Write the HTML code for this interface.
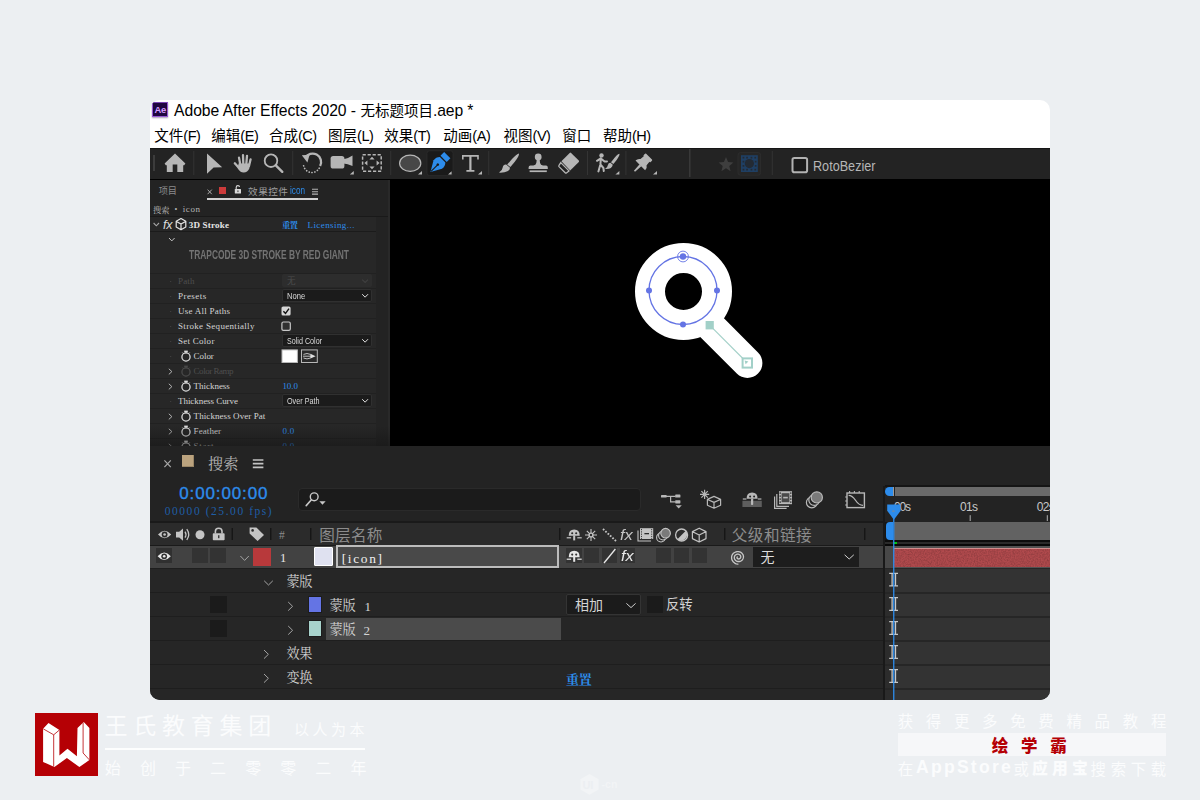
<!DOCTYPE html>
<html lang="zh-CN">
<head>
<meta charset="utf-8">
<title>Adobe After Effects 2020 - 无标题项目.aep *</title>
<style>
*{box-sizing:border-box;margin:0;padding:0}
html,body{width:1200px;height:800px;overflow:hidden;background:#eceff2}
body{position:relative;font-family:"Liberation Sans","Noto Sans CJK SC",sans-serif;}
#win{position:absolute;left:150px;top:100px;width:900px;height:600px;border-radius:10px;overflow:hidden}
#win>div,#win>svg,#o>div,#o>svg,.wm>div,.wm>svg{position:absolute}
#o{left:-150px;top:-100px;width:1200px;height:800px}
.wm{position:absolute;left:0;top:0;width:1200px;height:800px}
.t{white-space:nowrap;line-height:1}
.ui{font-family:"Liberation Sans","Noto Sans CJK SC",sans-serif}
.sim{font-family:"Liberation Mono","Noto Serif CJK SC",monospace}
.ser{font-family:"Liberation Serif","Noto Serif CJK SC",serif}
svg{overflow:visible}
.mn{top:28.5px;font-size:14.5px;color:#000;margin-left:-.7px}.lp{letter-spacing:-.45px}
</style>
</head>
<body>
<div id="win">
<!-- TITLE -->
<div style="left:0;top:0;width:900px;height:49px;background:#fff"></div>
<div style="left:2.4px;top:2.2px;width:15.8px;height:14.8px;background:#1f0640;border:1px solid #9658d4;border-top-color:#7a45b4;box-shadow:0 1px 1.5px rgba(60,40,90,.45)"></div>
<div class="t ui" id="aeL" style="left:4.5px;top:4.8px;font-size:9.4px;font-weight:bold;color:#d59dff;letter-spacing:-0.35px">Ae</div>
<div class="t ui" id="ttl" style="left:24px;top:2.6px;font-size:15.7px;color:#000"><span style="letter-spacing:-.03px">Adobe After Effects 2020 - </span><span style="font-size:14.5px">无标题项目</span><span style="letter-spacing:-.1px">.aep *</span></div>

<!-- MENU -->
<div class="t ui mn" style="left:5px">文件<span class="lp">(F)</span></div>
<div class="t ui mn" style="left:62px">编辑<span class="lp">(E)</span></div>
<div class="t ui mn" style="left:119.6px">合成<span class="lp">(C)</span></div>
<div class="t ui mn" style="left:178.8px">图层<span class="lp">(L)</span></div>
<div class="t ui mn" style="left:235px">效果<span class="lp">(T)</span></div>
<div class="t ui mn" style="left:294px">动画<span class="lp">(A)</span></div>
<div class="t ui mn" style="left:354.2px">视图<span class="lp">(V)</span></div>
<div class="t ui mn" style="left:413px">窗口</div>
<div class="t ui mn" style="left:453.6px">帮助<span class="lp">(H)</span></div>

<!-- TOOLBAR -->
<div style="left:0;top:48px;width:900px;height:1px;background:#161616"></div>
<div style="left:0;top:49px;width:900px;height:29.8px;background:#232323"></div>
<div style="left:0;top:78.8px;width:900px;height:1.2px;background:#000"></div>
<svg style="left:0;top:48px" width="900" height="32" viewBox="150 148 900 32">
<g fill="#b6b6b6" stroke="none">
<rect x="153" y="155" width="2" height="16" fill="#3c3c3c"/>
<g fill="#343434"><rect x="193.3" y="151" width="1" height="24"/><rect x="292.2" y="151" width="1" height="24"/><rect x="390.2" y="151" width="1" height="24"/><rect x="488.2" y="151" width="1" height="24"/><rect x="587" y="151" width="1" height="24"/><rect x="625.4" y="151" width="1" height="24"/><rect x="689" y="149" width="1.6" height="28" fill="#383838"/><rect x="771.8" y="151" width="1" height="24"/></g>
<!-- home -->
<path d="M175 153.4 L185.4 163.4 L184.2 165.2 H183.2 V172 H177.3 V164.6 H172.7 V172 H166.8 V165.2 H165.8 L164.6 163.4 Z"/>
<!-- arrow -->
<path d="M207 153.4 L222.2 167.2 L213.6 167.6 L207 173.8 Z"/>
<!-- hand -->
<g stroke="#b6b6b6" stroke-width="2.3" stroke-linecap="round" fill="none"><path d="M239 157.6 L240.4 165"/><path d="M243 155.2 L243.3 164"/><path d="M247 155.8 L246.3 164"/><path d="M250.6 159.3 L249 166"/><path d="M234.8 163.3 L239.5 168.5"/></g>
<path d="M238.6 163.5 H250 L249.3 168.5 Q247.5 172.6 243.6 172.5 Q240 172.5 237.6 168 Z"/>
<!-- magnifier -->
<circle cx="271" cy="160.7" r="6.3" fill="none" stroke="#b6b6b6" stroke-width="1.8"/><path d="M275.8 165.4 L282.3 171.8" stroke="#b6b6b6" stroke-width="2.4" stroke-linecap="round"/>
<!-- rotate -->
<path d="M305.2 158 A8.4 8.4 0 0 1 320.1 166" fill="none" stroke="#b6b6b6" stroke-width="2.3"/>
<path d="M301.8 155.2 L309.6 154.8 L307.4 162.6 Z"/>
<path d="M319.2 168.2 A8.4 8.4 0 0 1 303.6 165.6" fill="none" stroke="#b6b6b6" stroke-width="1.7" stroke-dasharray="0.1 2.75" stroke-linecap="round"/>
<!-- camera -->
<rect x="330.6" y="156" width="13.8" height="12.6" rx="2.6"/><path d="M343.6 159.2 Q347.4 158.8 352.5 155.4 V166 Q347.4 163.8 343.6 163.4 Z"/><path d="M353.8 171 V174.6 H349.8 Z"/>
<!-- pan-behind frame -->
<rect x="362.6" y="154.8" width="18.6" height="16.4" fill="none" stroke="#b6b6b6" stroke-width="1.5" stroke-dasharray="3.2 1.8"/>
<path d="M372 156.8 L374.6 159.6 H369.4 Z M372 169.2 L374.6 166.4 H369.4 Z M364.4 163 L367.4 160.4 V165.6 Z M379.6 163 L376.6 160.4 V165.6 Z"/>
<!-- ellipse -->
<ellipse cx="410.2" cy="163.2" rx="10.6" ry="8.1" fill="#474747" stroke="#b6b6b6" stroke-width="1.2"/><path d="M422 171 V174.6 H418 Z"/>
<!-- pen (selected) -->
<rect x="427" y="150.8" width="26" height="24.8" rx="2.5" fill="#1a1a1a" stroke="#2c2c2c" stroke-width="0.8"/>
<g transform="translate(440.2 162.2) rotate(45)" fill="#2d8ceb"><path d="M0 13.8 L-6 3.4 Q-6.6 -0.6 -3.9 -3.4 H3.9 Q6.6 -0.6 6 3.4 Z"/><rect x="-4.4" y="-10" width="8.8" height="5.2"/><path d="M0 13 V4" stroke="#1a1a1a" stroke-width="1.1"/><circle cx="0" cy="3.4" r="1.3" fill="#1a1a1a"/></g>
<path d="M451.6 171.2 V174.6 H448 Z"/>
<!-- T -->
<path d="M462 155 H478.8 V159.6 H477.2 V156.8 H471.5 V170.1 H474.4 V171.8 H466.4 V170.1 H469.3 V156.8 H463.6 V159.6 H462 Z"/><path d="M482 171 V174.6 H478 Z"/>
<!-- brush -->
<path d="M518.9 153.4 Q519.6 155.4 515 161.4 L510.4 167 L507.2 164.6 L512 159 Q517 153.6 518.9 153.4 Z"/><path d="M506.2 164.6 L510 167.8 Q509.6 173 499 172.6 Q502.4 170.6 502.6 167.8 Q503.4 164.2 506.2 164.6 Z"/>
<!-- stamp -->
<circle cx="538.2" cy="156.9" r="3.4"/><path d="M536.8 159.6 H539.6 L540.1 163 Q540.5 165.4 543 165.6 H546 Q547.8 165.8 547.8 167.6 V169 H528.6 V167.6 Q528.6 165.8 530.4 165.6 H533.4 Q535.9 165.4 536.3 163 Z"/><rect x="529.6" y="170.4" width="17.2" height="1.7"/>
<!-- eraser -->
<path d="M569.7 152.9 Q570.4 152.3 571.1 152.9 L578.8 160.6 Q579.4 161.3 578.8 162 L570.2 170.4 L561.4 161.3 Z"/><path d="M560.8 162.6 L569 170.9 L566.4 173 Q565.8 173.4 565.2 172.8 L559 166.6 Q558.5 166 559 165.4 Z" fill="none" stroke="#b6b6b6" stroke-width="1.3"/>
<!-- roto brush -->
<circle cx="601.5" cy="155.4" r="2.2"/><path d="M600.8 158.4 L597 160.8 M600.8 158.4 L604.6 161.6 L607 161.4 M600.9 158.2 L600.4 164.4 L598.4 171.4 M600.4 164.4 L603.4 168 L603.8 171" fill="none" stroke="#b6b6b6" stroke-width="2" stroke-linecap="round" stroke-linejoin="round"/>
<path d="M619.4 153.8 Q620 155.4 616.6 160 L613.4 164 L611 162.2 L614.4 158 Q618 153.8 619.4 153.8 Z"/><path d="M610.4 162.8 L612.8 164.8 Q612 169.6 605 169 Q607.6 167.4 607.8 165.2 Q608.4 162.8 610.4 162.8 Z"/><path d="M619.4 171 V174.6 H615.4 Z"/>
<!-- pin -->
<g transform="translate(640.3 165.4) rotate(45)"><rect x="-4.9" y="-12.4" width="9.8" height="3.4" rx="0.8"/><path d="M-3.9 -9.6 H3.9 L4.3 -4.6 Q6.8 -3.2 6.8 0 H-6.8 Q-6.8 -3.2 -4.3 -4.6 Z"/><path d="M-1.4 -0.4 H1.4 L0.8 8.2 H-0.8 Z"/></g><path d="M657 171 V174.6 H653 Z"/>
<!-- star -->
<path d="M726 157 L728.1 162 L733.4 162.4 L729.3 165.9 L730.6 171.2 L726 168.3 L721.4 171.2 L722.7 165.9 L718.6 162.4 L723.9 162 Z" fill="#3e3e3e"/>
<!-- grid box -->
<rect x="738" y="152.6" width="22.6" height="22.6" rx="2.5" fill="#262626" stroke="#2e2e2e" stroke-width="0.8"/>
<rect x="741" y="155.2" width="16.8" height="16.8" fill="#1f3f63"/>
<circle cx="749.4" cy="163.6" r="4.6" fill="#232a33"/>
<g fill="#232a33"><rect x="742.6" y="156.8" width="1.7" height="1.7"/><rect x="746.2" y="156.8" width="1.7" height="1.7"/><rect x="750.6" y="156.8" width="1.7" height="1.7"/><rect x="754.4" y="156.8" width="1.7" height="1.7"/><rect x="742.6" y="160.8" width="1.7" height="1.7"/><rect x="754.8" y="160.8" width="1.7" height="1.7"/><rect x="742.6" y="165" width="1.7" height="1.7"/><rect x="754.8" y="165" width="1.7" height="1.7"/><rect x="742.6" y="168.8" width="1.7" height="1.7"/><rect x="746.2" y="168.8" width="1.7" height="1.7"/><rect x="750.6" y="168.8" width="1.7" height="1.7"/><rect x="754.4" y="168.8" width="1.7" height="1.7"/></g>
<!-- checkbox -->
<rect x="792.5" y="158" width="14.6" height="14.2" rx="1.8" fill="#1b1b1b" stroke="#b2b2b2" stroke-width="2"/>
</g>
<text x="813" y="170.6" font-family="Liberation Sans, sans-serif" font-size="14.4" fill="#b6b6b6" textLength="62.5" lengthAdjust="spacingAndGlyphs">RotoBezier</text>
</svg>


<div id="o">
<!-- EFFECTS PANEL -->
<div style="left:150.00px;top:180.00px;width:240.00px;height:266.00px;background:#232323;"></div>
<div style="left:388.40px;top:180.00px;width:1.60px;height:266.00px;background:#292929;"></div>
<div style="left:150.00px;top:216.50px;width:226.00px;height:230.00px;background:#272727;"></div>
<div class="t ui" style="left:158.70px;top:186.91px;font-size:9.2px;color:#8c8c8c;letter-spacing:-0.175px;">项目</div>
<div style="left:218.50px;top:186.60px;width:7.60px;height:7.40px;background:#cc3b3b;"></div>
<div class="t ui" style="left:248.10px;top:186.57px;font-size:9.6px;color:#9c9c9c;letter-spacing:0.475px;">效果控件</div>
<div class="t ui" style="left:290.00px;top:185.46px;font-size:10.8px;color:#2d8ceb;transform:scaleX(0.7571);transform-origin:0 50%;">icon</div>
<div style="left:207.20px;top:198.30px;width:110.80px;height:1.70px;background:#d2d2d2;"></div>
<div class="t sim" style="left:153.00px;top:206.51px;font-size:8.2px;color:#b4b4b4;letter-spacing:0.009px;">搜索</div>
<div class="t ser" style="left:174.60px;top:206.20px;font-size:8px;color:#b4b4b4;">•</div>
<div class="t ser" style="left:182.75px;top:205.36px;font-size:9px;color:#b4b4b4;letter-spacing:0.567px;">icon</div>
<div style="left:150.00px;top:215.50px;width:238.40px;height:1.00px;background:#191919;"></div>
<div class="t ui" style="left:163.00px;top:218.62px;font-size:12.5px;color:#dcdcdc;font-style:italic;letter-spacing:-0.134px;">fx</div>
<div class="t ser" style="left:188.75px;top:220.96px;font-size:9px;color:#e6e6e6;font-weight:bold;letter-spacing:0.201px;">3D Stroke</div>
<div class="t sim" style="left:281.90px;top:221.91px;font-size:8.2px;color:#2d8ceb;font-weight:bold;letter-spacing:-0.291px;">重置</div>
<div class="t ser" style="left:307.50px;top:220.96px;font-size:9px;color:#2d8ceb;letter-spacing:0.423px;">Licensing...</div>
<div style="left:150.00px;top:231.00px;width:226.00px;height:1.00px;background:#1b1b1b;"></div>
<div class="t ui" style="left:189.00px;top:248.56px;font-size:12.8px;color:#737373;font-weight:bold;transform:scaleX(0.6567);transform-origin:0 50%;">TRAPCODE 3D STROKE BY RED GIANT</div>
<div style="left:150.00px;top:273.00px;width:226.00px;height:1.00px;background:#212121;"></div>
<div class="t ser" style="left:178.00px;top:277.06px;font-size:9px;color:#4e4e4e;letter-spacing:0.128px;">Path</div>
<div style="left:282.00px;top:274.20px;width:90.20px;height:12.80px;background:#2d2d2d;border-radius:2px"></div>
<div class="t ui" style="left:287.00px;top:276.92px;font-size:8.6px;color:#4c4c4c;">无</div>
<div style="left:150.00px;top:288.00px;width:226.00px;height:1.00px;background:#212121;"></div>
<div class="t ser" style="left:178.00px;top:292.06px;font-size:9px;color:#d4d4d4;letter-spacing:0.458px;">Presets</div>
<div style="left:282.00px;top:289.20px;width:90.20px;height:12.80px;background:#1b1b1b;border-radius:2px;border:1px solid #303030"></div>
<div class="t ui" style="left:286.90px;top:291.37px;font-size:9.6px;color:#dadada;transform:scaleX(0.7891);transform-origin:0 50%;">None</div>
<div style="left:150.00px;top:303.00px;width:226.00px;height:1.00px;background:#212121;"></div>
<div class="t ser" style="left:178.00px;top:307.06px;font-size:9px;color:#d4d4d4;letter-spacing:0.249px;">Use All Paths</div>
<div style="left:150.00px;top:318.00px;width:226.00px;height:1.00px;background:#212121;"></div>
<div class="t ser" style="left:178.00px;top:322.06px;font-size:9px;color:#d4d4d4;letter-spacing:0.314px;">Stroke Sequentially</div>
<div style="left:150.00px;top:333.00px;width:226.00px;height:1.00px;background:#212121;"></div>
<div class="t ser" style="left:178.00px;top:337.06px;font-size:9px;color:#d4d4d4;letter-spacing:0.267px;">Set Color</div>
<div style="left:282.00px;top:334.20px;width:90.20px;height:12.80px;background:#1b1b1b;border-radius:2px;border:1px solid #303030"></div>
<div class="t ui" style="left:286.90px;top:336.37px;font-size:9.6px;color:#dadada;transform:scaleX(0.7457);transform-origin:0 50%;">Solid Color</div>
<div style="left:150.00px;top:348.00px;width:226.00px;height:1.00px;background:#212121;"></div>
<div class="t ser" style="left:193.60px;top:352.06px;font-size:9px;color:#d4d4d4;letter-spacing:-0.066px;">Color</div>
<div style="left:150.00px;top:363.00px;width:226.00px;height:1.00px;background:#212121;"></div>
<div class="t ser" style="left:193.60px;top:367.06px;font-size:9px;color:#4e4e4e;letter-spacing:-0.472px;">Color Ramp</div>
<div style="left:150.00px;top:378.00px;width:226.00px;height:1.00px;background:#212121;"></div>
<div class="t ser" style="left:193.60px;top:382.06px;font-size:9px;color:#d4d4d4;letter-spacing:-0.031px;">Thickness</div>
<div class="t ser" style="left:282.40px;top:382.06px;font-size:9px;color:#2d8ceb;letter-spacing:-0.083px;">10.0</div>
<div style="left:150.00px;top:393.00px;width:226.00px;height:1.00px;background:#212121;"></div>
<div class="t ser" style="left:178.00px;top:397.06px;font-size:9px;color:#d4d4d4;letter-spacing:-0.054px;">Thickness Curve</div>
<div style="left:282.00px;top:394.20px;width:90.20px;height:12.80px;background:#1b1b1b;border-radius:2px;border:1px solid #303030"></div>
<div class="t ui" style="left:286.90px;top:396.37px;font-size:9.6px;color:#dadada;transform:scaleX(0.7523);transform-origin:0 50%;">Over Path</div>
<div style="left:150.00px;top:408.00px;width:226.00px;height:1.00px;background:#212121;"></div>
<div class="t ser" style="left:193.60px;top:412.06px;font-size:9px;color:#d4d4d4;letter-spacing:0.074px;">Thickness Over Pat</div>
<div style="left:150.00px;top:423.00px;width:226.00px;height:1.00px;background:#212121;"></div>
<div class="t ser" style="left:193.60px;top:427.06px;font-size:9px;color:#d4d4d4;letter-spacing:0.083px;">Feather</div>
<div class="t ser" style="left:282.40px;top:427.06px;font-size:9px;color:#2d8ceb;letter-spacing:0.250px;">0.0</div>
<div style="left:150.00px;top:438.00px;width:226.00px;height:1.00px;background:#212121;"></div>
<div class="t ser" style="left:193.60px;top:442.06px;font-size:9px;color:#d4d4d4;letter-spacing:0.750px;">Start</div>
<div class="t ser" style="left:282.40px;top:442.06px;font-size:9px;color:#2d8ceb;letter-spacing:0.250px;">0.0</div>
<svg style="left:0;top:0;" width="1200" height="800" viewBox="0 0 1200 800"><rect x="170.2" y="281" width="1" height="1" fill="#454545"/><path d="M362.2 279.6 L365.1 282.4 L368 279.6" fill="none" stroke="#404040" stroke-width="1.1"/><rect x="170.2" y="296" width="1" height="1" fill="#454545"/><path d="M362.2 294.2 L365.1 297.2 L368 294.2" fill="none" stroke="#e0e0e0" stroke-width="1"/><rect x="170.2" y="311" width="1" height="1" fill="#454545"/><rect x="281.5" y="306.5" width="9.1" height="9.1" rx="1.6" fill="#d6d6d6"/><path d="M283.4 311.2 L285.5 313.5 L289 308.6" fill="none" stroke="#111" stroke-width="1.4"/><rect x="170.2" y="326" width="1" height="1" fill="#454545"/><rect x="281.9" y="322" width="8.4" height="8.4" rx="1.4" fill="#303030" stroke="#c8c8c8" stroke-width="1.2"/><rect x="170.2" y="341" width="1" height="1" fill="#454545"/><path d="M362.2 339.2 L365.1 342.2 L368 339.2" fill="none" stroke="#e0e0e0" stroke-width="1"/><rect x="170.2" y="356" width="1" height="1" fill="#454545"/><circle cx="186" cy="357" r="4.1" fill="none" stroke="#dcdcdc" stroke-width="1.3"/><rect x="184.2" y="350.6" width="3.6" height="1.5" fill="#dcdcdc"/><rect x="185.4" y="351.8" width="1.2" height="1.4" fill="#dcdcdc"/><path d="M182.4 352.6 L183.4 353.6 M189.6 352.6 L188.6 353.6" stroke="#dcdcdc" stroke-width="1"/><rect x="282" y="349.9" width="15.4" height="12.6" fill="#fff" stroke="#b8b8b8" stroke-width="1"/><rect x="301.5" y="349.9" width="15.8" height="12.6" fill="#2a2a2a" stroke="#b8b8b8" stroke-width="1"/><path d="M303 356.2 H311 M303.5 354.4 Q307 352.6 310.5 354.4 M303.5 358 Q307 359.8 310.5 358" fill="none" stroke="#d0d0d0" stroke-width="0.9"/><path d="M310.4 353.8 L315.6 356.2 L310.4 358.6 Z" fill="#e0e0e0"/><path d="M168.8 368.8 L171.9 371.6 L168.8 374.4" fill="none" stroke="#b4b4b4" stroke-width="1"/><circle cx="186" cy="372" r="4.1" fill="none" stroke="#4a4a4a" stroke-width="1.3"/><rect x="184.2" y="365.6" width="3.6" height="1.5" fill="#4a4a4a"/><rect x="185.4" y="366.8" width="1.2" height="1.4" fill="#4a4a4a"/><path d="M182.4 367.6 L183.4 368.6 M189.6 367.6 L188.6 368.6" stroke="#4a4a4a" stroke-width="1"/><path d="M168.8 383.8 L171.9 386.6 L168.8 389.4" fill="none" stroke="#b4b4b4" stroke-width="1"/><circle cx="186" cy="387" r="4.1" fill="none" stroke="#dcdcdc" stroke-width="1.3"/><rect x="184.2" y="380.6" width="3.6" height="1.5" fill="#dcdcdc"/><rect x="185.4" y="381.8" width="1.2" height="1.4" fill="#dcdcdc"/><path d="M182.4 382.6 L183.4 383.6 M189.6 382.6 L188.6 383.6" stroke="#dcdcdc" stroke-width="1"/><rect x="170.2" y="401" width="1" height="1" fill="#454545"/><path d="M362.2 399.2 L365.1 402.2 L368 399.2" fill="none" stroke="#e0e0e0" stroke-width="1"/><path d="M168.8 413.8 L171.9 416.6 L168.8 419.4" fill="none" stroke="#b4b4b4" stroke-width="1"/><circle cx="186" cy="417" r="4.1" fill="none" stroke="#dcdcdc" stroke-width="1.3"/><rect x="184.2" y="410.6" width="3.6" height="1.5" fill="#dcdcdc"/><rect x="185.4" y="411.8" width="1.2" height="1.4" fill="#dcdcdc"/><path d="M182.4 412.6 L183.4 413.6 M189.6 412.6 L188.6 413.6" stroke="#dcdcdc" stroke-width="1"/><path d="M168.8 428.8 L171.9 431.6 L168.8 434.4" fill="none" stroke="#b4b4b4" stroke-width="1"/><circle cx="186" cy="432" r="4.1" fill="none" stroke="#dcdcdc" stroke-width="1.3"/><rect x="184.2" y="425.6" width="3.6" height="1.5" fill="#dcdcdc"/><rect x="185.4" y="426.8" width="1.2" height="1.4" fill="#dcdcdc"/><path d="M182.4 427.6 L183.4 428.6 M189.6 427.6 L188.6 428.6" stroke="#dcdcdc" stroke-width="1"/><path d="M168.8 443.8 L171.9 446.6 L168.8 449.4" fill="none" stroke="#b4b4b4" stroke-width="1"/><circle cx="186" cy="447" r="4.1" fill="none" stroke="#dcdcdc" stroke-width="1.3"/><rect x="184.2" y="440.6" width="3.6" height="1.5" fill="#dcdcdc"/><rect x="185.4" y="441.8" width="1.2" height="1.4" fill="#dcdcdc"/><path d="M182.4 442.6 L183.4 443.6 M189.6 442.6 L188.6 443.6" stroke="#dcdcdc" stroke-width="1"/><path d="M207.6 189.6 L211.8 194.2 M211.8 189.6 L207.6 194.2" stroke="#a8a8a8" stroke-width="1"/><rect x="234.8" y="189" width="6.2" height="4.6" rx="0.6" fill="#d8d8d8"/><path d="M236.2 189 V187.2 Q236.2 185.6 237.9 185.6 Q239.4 185.6 239.6 186.9" fill="none" stroke="#d8d8d8" stroke-width="1.1"/><rect x="237.5" y="190.4" width="0.9" height="1.7" fill="#222"/><path d="M312 189.3 H318 M312 191.7 H318 M312 194.1 H318" stroke="#b4b4b4" stroke-width="1.1"/><path d="M153.6 223 L156.3 225.8 L159 223" fill="none" stroke="#a4a4a4" stroke-width="1.1"/><path d="M181 218.6 L185.8 221.3 V226.9 L181 229.7 L176.2 226.9 V221.3 Z M176.4 221.4 L181 224 L185.6 221.4 M181 224 V229.5" fill="none" stroke="#e4e4e4" stroke-width="1.2" stroke-linejoin="round"/><path d="M169 238 L171.8 240.9 L174.6 238" fill="none" stroke="#c4c4c4" stroke-width="1"/></svg>
<div style="left:150.00px;top:426.00px;width:240.00px;height:20.00px;background:linear-gradient(to bottom,rgba(20,20,20,0),rgba(20,20,20,.55));"></div>
<!-- VIEWER -->
<div style="left:390.00px;top:178.80px;width:660.00px;height:267.20px;background:#000;"></div>
<svg style="left:0;top:0;" width="1200" height="800" viewBox="0 0 1200 800"><defs><filter id="sb" filterUnits="userSpaceOnUse" x="600" y="210" width="200" height="200"><feGaussianBlur stdDeviation="0.7"/></filter></defs><g filter="url(#sb)" stroke="#fff" fill="none" stroke-width="30" stroke-linecap="round"><circle cx="683.5" cy="291.5" r="33.5"/><path d="M709.6 325.2 L747.4 363"/></g><circle cx="683" cy="290.5" r="34" fill="none" stroke="#6474e4" stroke-width="1.3"/><g fill="#6474e4"><circle cx="649" cy="290.5" r="3"/><circle cx="717" cy="290.5" r="3"/><circle cx="683" cy="324.5" r="3"/><circle cx="683" cy="256.5" r="3.2"/></g><circle cx="683" cy="256.5" r="5.4" fill="none" stroke="#6474e4" stroke-width="0.9"/><path d="M709.6 325.2 L747.4 363" stroke="#a2d0c8" stroke-width="1.1"/><rect x="705.6" y="321" width="8.2" height="8.4" fill="#a2d0c8"/><rect x="742.6" y="358.4" width="9.4" height="9.2" fill="#fff" stroke="#a2d0c8" stroke-width="2"/><path d="M744.6 360.4 L748.4 361.4 L745.6 364.2 Z" fill="#a2d0c8"/></svg>
<!-- TIMELINE -->
<div style="left:150.00px;top:446.00px;width:900.00px;height:254.00px;background:#232323;"></div>
<div style="left:181.70px;top:455.10px;width:12.50px;height:12.40px;background:#bba37e;box-shadow:inset -1px -1px 0 #9a8666"></div>
<div class="t ser" style="left:208.00px;top:455.87px;font-size:15.2px;color:#b4b4b4;letter-spacing:0.025px;">搜索</div>
<div class="t ui" style="left:179.20px;top:484.81px;font-size:17px;color:#2d8ceb;letter-spacing:0.882px;-webkit-text-stroke:0.35px #2d8ceb;">0:00:00:00</div>
<div class="t ser" style="left:164.70px;top:506.37px;font-size:11.5px;color:#1f5ea6;letter-spacing:1.557px;">00000 (25.00 fps)</div>
<div style="left:297.50px;top:488.30px;width:343.50px;height:22.40px;background:#1b1b1b;border-radius:4px;border:1px solid #2a2a2a"></div>
<div style="left:150.00px;top:520.50px;width:735.00px;height:2.00px;background:#1a1a1a;"></div>
<div style="left:150.00px;top:522.50px;width:735.00px;height:22.00px;background:#2b2b2b;"></div>
<div style="left:150.00px;top:544.50px;width:735.00px;height:1.00px;background:#1a1a1a;"></div>
<div style="left:150.00px;top:545.50px;width:735.00px;height:23.00px;background:#424242;"></div>
<div style="left:150.00px;top:568.50px;width:733.00px;height:131.50px;background:#262626;"></div>
<div style="left:150.00px;top:568.30px;width:733.00px;height:1.00px;background:#1e1e1e;"></div>
<div style="left:150.00px;top:592.30px;width:733.00px;height:1.00px;background:#1e1e1e;"></div>
<div style="left:150.00px;top:616.30px;width:733.00px;height:1.00px;background:#1e1e1e;"></div>
<div style="left:150.00px;top:640.30px;width:733.00px;height:1.00px;background:#1e1e1e;"></div>
<div style="left:150.00px;top:664.30px;width:733.00px;height:1.00px;background:#1e1e1e;"></div>
<div style="left:150.00px;top:688.30px;width:733.00px;height:1.00px;background:#1e1e1e;"></div>
<div class="t ser" style="left:279.00px;top:530.37px;font-size:11.5px;color:#8c8c8c;">#</div>
<div class="t ui" style="left:319.20px;top:528.09px;font-size:15.6px;color:#8c8c8c;letter-spacing:0.270px;">图层名称</div>
<div class="t ui" style="left:731.70px;top:528.09px;font-size:15.6px;color:#8c8c8c;letter-spacing:0.504px;">父级和链接</div>
<div style="left:156.30px;top:547.50px;width:15.70px;height:15.60px;background:#303030;"></div>
<div style="left:192.00px;top:547.50px;width:15.60px;height:15.60px;background:#333;"></div>
<div style="left:210.00px;top:547.50px;width:15.80px;height:15.60px;background:#333;"></div>
<div style="left:253.30px;top:547.60px;width:18.00px;height:18.20px;background:#b8393b;"></div>
<div class="t ser" style="left:280.00px;top:552.13px;font-size:12.5px;color:#e8e8e8;">1</div>
<div style="left:314.00px;top:546.80px;width:19.30px;height:19.50px;background:#dfe1f0;border:1px solid #fff;border-radius:1px"></div>
<div style="left:336.30px;top:545.40px;width:222.50px;height:23.00px;background:#494949;border:2px solid #bcbcbc"></div>
<div class="t ser" style="left:341.70px;top:551.78px;font-size:13.4px;color:#f0f0f0;letter-spacing:1.663px;">[icon]</div>
<div style="left:566.00px;top:548.00px;width:15.80px;height:15.20px;background:#333;"></div>
<div style="left:584.00px;top:548.00px;width:15.20px;height:15.20px;background:#333;"></div>
<div style="left:619.60px;top:548.00px;width:15.00px;height:15.20px;background:#333;"></div>
<div style="left:601.60px;top:548.00px;width:15.60px;height:15.20px;background:#333;"></div>
<div class="t ui" style="left:620.60px;top:548.28px;font-size:15.5px;color:#e8e8e8;font-style:italic;transform:scaleX(1.0446);transform-origin:0 50%;">fx</div>
<div class="t ui" style="left:620.40px;top:526.88px;font-size:15.5px;color:#c4c4c4;font-style:italic;transform:scaleX(1.0611);transform-origin:0 50%;">fx</div>
<div style="left:655.60px;top:548.00px;width:15.40px;height:15.20px;background:#333;"></div>
<div style="left:673.60px;top:548.00px;width:15.40px;height:15.20px;background:#333;"></div>
<div style="left:691.60px;top:548.00px;width:15.40px;height:15.20px;background:#333;"></div>
<div style="left:753.00px;top:547.30px;width:106.00px;height:19.40px;background:#1d1d1d;"></div>
<div class="t ui" style="left:760.40px;top:550.35px;font-size:14px;color:#dcdcdc;">无</div>
<div class="t ser" style="left:286.40px;top:575.25px;font-size:13.2px;color:#d4d4d4;letter-spacing:-0.375px;">蒙版</div>
<div style="left:210.00px;top:596.00px;width:17.00px;height:16.50px;background:#1b1b1b;"></div>
<div style="left:307.60px;top:596.00px;width:14.00px;height:17.00px;background:#6474e4;border:1px solid #1c1c1c"></div>
<div class="t ser" style="left:329.60px;top:599.35px;font-size:13.2px;color:#d4d4d4;letter-spacing:-0.375px;">蒙版</div>
<div class="t ser" style="left:364.40px;top:599.51px;font-size:13px;color:#d4d4d4;">1</div>
<div style="left:325.60px;top:617.60px;width:235.00px;height:22.60px;background:#4b4b4b;"></div>
<div style="left:210.00px;top:620.00px;width:17.00px;height:16.50px;background:#1b1b1b;"></div>
<div style="left:307.60px;top:620.00px;width:14.00px;height:17.00px;background:#a8d3cc;border:1px solid #1c1c1c"></div>
<div class="t ser" style="left:329.60px;top:623.35px;font-size:13.2px;color:#d4d4d4;letter-spacing:-0.375px;">蒙版</div>
<div class="t ser" style="left:363.60px;top:623.51px;font-size:13px;color:#d4d4d4;">2</div>
<div class="t ser" style="left:286.40px;top:647.35px;font-size:13.2px;color:#d4d4d4;letter-spacing:-0.375px;">效果</div>
<div class="t ser" style="left:286.40px;top:671.35px;font-size:13.2px;color:#d4d4d4;letter-spacing:-0.375px;">变换</div>
<div style="left:566.00px;top:594.00px;width:75.00px;height:21.00px;background:#1b1b1b;border-radius:2px;border:1px solid #343434"></div>
<div class="t ui" style="left:575.00px;top:597.95px;font-size:14px;color:#d4d4d4;letter-spacing:0.000px;">相加</div>
<div style="left:646.70px;top:596.00px;width:16.60px;height:16.70px;background:#1b1b1b;"></div>
<div class="t ui" style="left:666.00px;top:598.26px;font-size:13.4px;color:#d4d4d4;letter-spacing:-0.081px;">反转</div>
<div class="t ser" style="left:566.00px;top:673.11px;font-size:13px;color:#2d8ceb;font-weight:bold;letter-spacing:-0.316px;">重置</div>
<div style="left:883.00px;top:486.00px;width:2.00px;height:214.00px;background:#191919;"></div>
<div style="left:885.00px;top:486.00px;width:165.00px;height:36.00px;background:#232323;"></div>
<div style="left:885.00px;top:546.00px;width:165.00px;height:21.60px;background:#525252;"></div>
<div style="left:885.00px;top:569.00px;width:165.00px;height:131.00px;background:#333;"></div>
<div style="left:885.00px;top:546.00px;width:8.00px;height:154.00px;background:rgba(0,0,0,.12);"></div>
<div style="left:885.00px;top:567.60px;width:165.00px;height:1.80px;background:#262626;"></div>
<div style="left:885.00px;top:592.00px;width:165.00px;height:1.80px;background:#262626;"></div>
<div style="left:885.00px;top:616.00px;width:165.00px;height:1.80px;background:#262626;"></div>
<div style="left:885.00px;top:640.20px;width:165.00px;height:1.80px;background:#262626;"></div>
<div style="left:885.00px;top:664.30px;width:165.00px;height:1.80px;background:#262626;"></div>
<div style="left:885.00px;top:688.30px;width:165.00px;height:1.80px;background:#262626;"></div>
<div style="left:885.00px;top:485.20px;width:165.00px;height:1.60px;background:#151515;"></div>
<div style="left:894.60px;top:486.80px;width:155.40px;height:9.40px;background:#6a6a6a;"></div>
<div style="left:885.00px;top:486.80px;width:7.60px;height:9.40px;background:#2d8ceb;border-radius:5px 0 0 5px"></div>
<div style="left:893.40px;top:487.00px;width:1.00px;height:9.00px;background:#9a9a9a;"></div>
<div style="left:885.00px;top:521.50px;width:165.00px;height:19.00px;background:#161616;"></div>
<div style="left:894.00px;top:522.40px;width:156.00px;height:17.20px;background:#626262;"></div>
<div style="left:886.20px;top:522.40px;width:6.40px;height:17.20px;background:#2d8ceb;border-radius:4px 0 0 4px"></div>
<div style="left:885.00px;top:539.60px;width:165.00px;height:2.00px;background:#0c0c0c;"></div>
<div style="left:885.00px;top:541.60px;width:165.00px;height:2.40px;background:#2a2a2a;"></div>
<div style="left:885.00px;top:544.00px;width:165.00px;height:2.00px;background:#080808;"></div>
<div style="left:894.20px;top:541.60px;width:2.40px;height:2.40px;background:#00c814;"></div>
<div style="left:894.00px;top:548.00px;width:156.00px;height:18.80px;background:#b04a4d;border-top:1px solid #d08c8c"></div>
<div class="t ui" style="left:894.00px;top:501.34px;font-size:12px;color:#c8c8c8;letter-spacing:-1.180px;">00s</div>
<div class="t ui" style="left:960.00px;top:501.34px;font-size:12px;color:#c8c8c8;letter-spacing:-0.680px;">01s</div>
<div class="t ui" style="left:1036.80px;top:501.34px;font-size:12px;color:#c8c8c8;letter-spacing:-0.680px;">02s</div>
<svg style="left:0;top:0;" width="1200" height="800" viewBox="0 0 1200 800"><path d="M164.4 460.4 L170.8 467.2 M170.8 460.4 L164.4 467.2" stroke="#a8a8a8" stroke-width="1.2"/><path d="M252.8 460 H263.4 M252.8 463.7 H263.4 M252.8 467.4 H263.4" stroke="#c4c4c4" stroke-width="1.7"/><circle cx="314.2" cy="496.8" r="3.9" fill="none" stroke="#c8c8c8" stroke-width="1.4"/><path d="M311.4 499.8 L306.2 505.6" stroke="#c8c8c8" stroke-width="1.6" stroke-linecap="round"/><path d="M319.4 501.2 H325.6 L322.5 504.8 Z" fill="#c8c8c8"/><g fill="#b8b8b8" stroke="#b8b8b8"><rect x="661" y="495" width="5.6" height="2.6" rx="0.6" stroke="none"/><rect x="675.2" y="494.4" width="5.2" height="3.2" rx="0.6" stroke="none"/><rect x="675.2" y="500.2" width="5.2" height="3.2" rx="0.6" stroke="none"/><path d="M666 496.3 H675.4 M670.6 496.3 V501.8 H675.4" fill="none" stroke-width="1.2"/><path d="M675.6 505.2 H681.8 L678.7 508.6 Z" stroke="none"/></g><g stroke="#b8b8b8" fill="none" stroke-width="1.2"><path d="M704.6 489.8 V499 M700 494.4 H709.2 M701.4 491.2 L707.8 497.6 M707.8 491.2 L701.4 497.6"/><path d="M714 496.4 L720.6 499.4 V505.2 L714 508.2 L707.4 505.2 V499.4 Z M707.6 499.5 L714 502.4 L720.4 499.5 M714 502.4 V508" stroke-linejoin="round"/></g><rect x="742.4" y="500.8" width="19.4" height="6.2" fill="#5e5e5e"/><path d="M746.6 498.8 Q746.6 492.6 752.1 492.6 Q757.6 492.6 757.6 498.8 Z" fill="#b8b8b8"/><circle cx="750.1" cy="496.4" r="1" fill="#232323"/><circle cx="754.1" cy="496.4" r="1" fill="#232323"/><rect x="751" y="498.4" width="2.2" height="6.6" rx="0.8" fill="#b8b8b8"/><rect x="742.8" y="498.4" width="3.6" height="1.2" fill="#b8b8b8"/><rect x="757.8" y="498.4" width="3.6" height="1.2" fill="#b8b8b8"/><g><rect x="779" y="491.2" width="13" height="13" fill="#b8b8b8"/><rect x="781.6" y="493.2" width="7.8" height="9" fill="#4a4a4a"/><rect x="783.2" y="496.8" width="4.6" height="1.6" fill="#b8b8b8"/><path d="M776.8 494 V506.4 H789 M774.6 496.6 V508.4 H786.6" fill="none" stroke="#b8b8b8" stroke-width="1.2"/><g fill="#232323"><rect x="779.6" y="492.4" width="1.2" height="1.4"/><rect x="779.6" y="495.4" width="1.2" height="1.4"/><rect x="779.6" y="498.4" width="1.2" height="1.4"/><rect x="779.6" y="501.4" width="1.2" height="1.4"/><rect x="790.2" y="492.4" width="1.2" height="1.4"/><rect x="790.2" y="495.4" width="1.2" height="1.4"/><rect x="790.2" y="498.4" width="1.2" height="1.4"/><rect x="790.2" y="501.4" width="1.2" height="1.4"/></g></g><g stroke="#b8b8b8" stroke-width="1.2"><circle cx="811.8" cy="502.4" r="5.4" fill="#232323"/><circle cx="814.2" cy="500" r="5.4" fill="#232323"/><circle cx="816.8" cy="497.4" r="5.6" fill="#7a7a7a"/></g><g stroke="#b8b8b8" fill="none"><rect x="847" y="493" width="17.4" height="14.6" stroke-width="1.4"/><path d="M848.6 495.4 C856 495.4 855 505.4 863 505.4" stroke-width="1.3"/><path d="M849.6 493 V491 M854.4 493 V491 M859.2 493 V491 M847 497 H845.2 M847 501 H845.2 M847 505 H845.2" stroke-width="1.1"/></g><path d="M158.0 534.5 Q164.6 527.1 171.2 534.5 Q164.6 541.9 158.0 534.5 Z" fill="#c4c4c4"/><circle cx="164.6" cy="534.5" r="2.9" fill="#2b2b2b"/><circle cx="164.6" cy="534.5" r="1.3" fill="#c4c4c4"/><path d="M176 531.8 H179.2 L183 528.4 V540.8 L179.2 537.4 H176 Z" fill="#c4c4c4"/><path d="M185 531.6 Q187 534.6 185 537.6 M186.8 529.2 Q190.6 534.6 186.8 540" fill="none" stroke="#c4c4c4" stroke-width="1.3"/><circle cx="200" cy="534.7" r="4.5" fill="#c4c4c4"/><rect x="212.8" y="533.2" width="11.8" height="7" rx="0.8" fill="#c4c4c4"/><path d="M215.4 533.4 V531.2 Q215.4 528.2 218.7 528.2 Q222 528.2 222 531.2 V533.4" fill="none" stroke="#c4c4c4" stroke-width="1.6"/><rect x="218.1" y="535.2" width="1.3" height="3" fill="#2b2b2b"/><rect x="231.6" y="528" width="1.4" height="12" fill="#161616"/><rect x="270" y="528" width="1.4" height="12" fill="#161616"/><rect x="310" y="528" width="1.4" height="12" fill="#161616"/><rect x="559" y="528" width="1.4" height="12" fill="#161616"/><rect x="724" y="528" width="1.4" height="12" fill="#161616"/><rect x="864" y="528" width="1.4" height="12" fill="#161616"/><path d="M249.6 527.4 H256.4 L264 535 L257.6 541 L249.6 533.6 Z" fill="#c4c4c4"/><circle cx="252.6" cy="530.4" r="1.3" fill="#2b2b2b"/><path d="M157.6 556.3 Q164.2 548.9 170.79999999999998 556.3 Q164.2 563.6999999999999 157.6 556.3 Z" fill="#e8e8e8"/><circle cx="164.2" cy="556.3" r="2.9" fill="#303030"/><circle cx="164.2" cy="556.3" r="1.3" fill="#e8e8e8"/><path d="M240.4 556 L244.6 560.4 L248.8 556" fill="none" stroke="#a4a4a4" stroke-width="1"/><path d="M568.7 535.8 Q568.7 529.4 574.2 529.4 Q579.7 529.4 579.7 535.8 Z" fill="#c4c4c4"/><circle cx="572.2" cy="533.1999999999999" r="1.05" fill="#2b2b2b"/><circle cx="576.2" cy="533.1999999999999" r="1.05" fill="#2b2b2b"/><rect x="573.2" y="535.4" width="2" height="5" fill="#c4c4c4"/><rect x="566.7" y="537.1999999999999" width="4.4" height="1.2" fill="#c4c4c4"/><rect x="577.3000000000001" y="537.1999999999999" width="4.4" height="1.2" fill="#c4c4c4"/><g stroke="#c4c4c4" stroke-width="1.1"><path d="M591 529 V541 M585 535 H597 M586.8 530.8 L595.2 539.2 M595.2 530.8 L586.8 539.2"/></g><circle cx="591" cy="535" r="2.6" fill="#c4c4c4"/><circle cx="591" cy="535" r="1.2" fill="#2b2b2b"/><path d="M603 529 L616 541" stroke="#c4c4c4" stroke-width="1.9" stroke-dasharray="1.7 1.5"/><rect x="640" y="528.2" width="13.2" height="10.8" fill="#c4c4c4"/><rect x="644.4" y="533" width="4.6" height="1.3" fill="#2b2b2b"/><path d="M641.5 529 V539 M651.7 529 V539" stroke="#2b2b2b" stroke-width="0.9" stroke-dasharray="1.2 1.1"/><path d="M638 530.6 V541 H651" fill="none" stroke="#c4c4c4" stroke-width="1.1"/><g stroke="#c4c4c4" stroke-width="1.1"><circle cx="661" cy="537.6" r="4.4" fill="#2b2b2b"/><circle cx="663" cy="535.6" r="4.4" fill="#2b2b2b"/><circle cx="665.6" cy="533.2" r="4.8" fill="#7a7a7a"/></g><circle cx="681.6" cy="535" r="6" fill="none" stroke="#c4c4c4" stroke-width="1.3"/><path d="M677.4 539.2 A6 6 0 0 0 685.8 530.8 Z" fill="#c4c4c4"/><path d="M699.2 528.2 L706 531.6 V538.6 L699.2 542 L692.4 538.6 V531.6 Z M692.6 531.8 L699.2 535 L705.8 531.8 M699.2 535 V541.8" fill="none" stroke="#c4c4c4" stroke-width="1.2" stroke-linejoin="round"/><path d="M568.7 557.1999999999999 Q568.7 550.8 574.2 550.8 Q579.7 550.8 579.7 557.1999999999999 Z" fill="#e8e8e8"/><circle cx="572.2" cy="554.5999999999999" r="1.05" fill="#333"/><circle cx="576.2" cy="554.5999999999999" r="1.05" fill="#333"/><rect x="573.2" y="556.8" width="2" height="5" fill="#e8e8e8"/><rect x="566.7" y="558.5999999999999" width="4.4" height="1.2" fill="#e8e8e8"/><rect x="577.3000000000001" y="558.5999999999999" width="4.4" height="1.2" fill="#e8e8e8"/><path d="M604 563 L615.4 549" stroke="#e8e8e8" stroke-width="1.3"/><path d="M737.3 556.9 L737.1 557.1 L737.0 557.4 L737.0 557.7 L737.0 558.0 L737.2 558.3 L737.5 558.6 L737.8 558.8 L738.2 558.9 L738.7 559.0 L739.2 558.9 L739.6 558.7 L740.1 558.4 L740.4 558.0 L740.7 557.5 L740.8 556.9 L740.7 556.3 L740.5 555.7 L740.1 555.1 L739.6 554.7 L738.9 554.3 L738.2 554.2 L737.4 554.1 L736.6 554.3 L735.9 554.7 L735.2 555.2 L734.7 555.9 L734.4 556.7 L734.3 557.6 L734.4 558.5 L734.8 559.4 L735.3 560.2 L736.1 560.8 L737.1 561.3 L738.1 561.5 L739.3 561.5 L740.4 561.3 L741.4 560.7 L742.3 560.0 L742.9 559.0 L743.3 557.9 L743.5 556.7 L743.3 555.5 L742.8 554.3 L742.0 553.3 L741.0 552.4 L739.7 551.9 L738.3 551.6 L736.9 551.6 L735.5 552.0 L734.2 552.7 L733.1 553.6 L732.2 554.9 L731.7 556.3 L731.6 557.8 L731.8 559.3 L732.4 560.7 L733.4 562.0 L734.7 563.1 L736.2 563.8 L737.9 564.1" fill="none" stroke="#c8c8c8" stroke-width="1.3" stroke-linecap="round" stroke-linejoin="round"/><path d="M844.6 554.8 L849.2 559 L853.8 554.8" fill="none" stroke="#d0d0d0" stroke-width="1"/><path d="M264.2 580.8 L268.5 585 L272.8 580.8" fill="none" stroke="#a4a4a4" stroke-width="1"/><path d="M288.2 602.0 L292.6 606.3 L288.2 610.5999999999999" fill="none" stroke="#a4a4a4" stroke-width="1"/><path d="M288.2 626.0 L292.6 630.3 L288.2 634.5999999999999" fill="none" stroke="#a4a4a4" stroke-width="1"/><path d="M264 650.0 L268.4 654.3 L264 658.5999999999999" fill="none" stroke="#a4a4a4" stroke-width="1"/><path d="M264 674.0 L268.4 678.3 L264 682.5999999999999" fill="none" stroke="#a4a4a4" stroke-width="1"/><path d="M626.4 603.4 L631 607.6 L635.6 603.4" fill="none" stroke="#d0d0d0" stroke-width="1"/><path d="M970.2 515.2 V521 M1047.3 515.2 V521" stroke="#b0b0b0" stroke-width="1"/><defs><filter id="nz" x="0" y="0" width="100%" height="100%"><feTurbulence type="fractalNoise" baseFrequency="0.7" numOctaves="2" seed="3"/><feColorMatrix type="matrix" values="0 0 0 0 0  0 0 0 0 0  0 0 0 0 0  1.6 0 0 0 -0.55"/></filter></defs><rect x="894" y="549" width="156" height="17.6" filter="url(#nz)" opacity="0.22"/><path d="M889.2 573.3000000000001 H898 M889.2 585.9 H898 M892.1 573.3000000000001 V585.9 M895.5 573.3000000000001 V585.9" stroke="#c8c8c8" stroke-width="1.3" fill="none"/><path d="M889.2 597.7 H898 M889.2 610.3 H898 M892.1 597.7 V610.3 M895.5 597.7 V610.3" stroke="#c8c8c8" stroke-width="1.3" fill="none"/><path d="M889.2 621.7 H898 M889.2 634.3 H898 M892.1 621.7 V634.3 M895.5 621.7 V634.3" stroke="#c8c8c8" stroke-width="1.3" fill="none"/><path d="M889.2 645.7 H898 M889.2 658.3 H898 M892.1 645.7 V658.3 M895.5 645.7 V658.3" stroke="#c8c8c8" stroke-width="1.3" fill="none"/><path d="M889.2 669.7 H898 M889.2 682.3 H898 M892.1 669.7 V682.3 M895.5 669.7 V682.3" stroke="#c8c8c8" stroke-width="1.3" fill="none"/><path d="M887.2 504.4 H900.6 V510.8 L893.9 519.8 L887.2 510.8 Z" fill="#2d8ceb"/><rect x="893.1" y="510" width="1.3" height="190" fill="#2d8ceb"/><rect x="892.2" y="510.6" width="2.4" height="1" fill="#888"/></svg>

</div>
</div>
<div class="wm">
<div style="left:34.70px;top:713.10px;width:63.40px;height:62.50px;background:#b50005;"></div>
<div class="t ui" style="left:104.60px;top:715.13px;font-size:23px;color:#fbfcfd;letter-spacing:5.720px;">王氏教育集团</div>
<div class="t ui" style="left:294.00px;top:721.90px;font-size:15px;color:#fbfcfd;letter-spacing:3.461px;">以人为本</div>
<div style="left:105.00px;top:747.50px;width:259.70px;height:2.70px;background:#fdfefe;"></div>
<div class="t ui" style="left:104.80px;top:760.86px;font-size:16px;color:#fbfcfd;letter-spacing:19.083px;">始创于二零零二年</div>
<div class="t ui" style="left:897.70px;top:713.56px;font-size:15.4px;color:#fbfcfd;letter-spacing:12.742px;">获得更多免费精品教程</div>
<div style="left:897.70px;top:733.30px;width:268.30px;height:22.40px;background:#f6f7f9;"></div>
<div class="t ui" style="left:991.70px;top:737.63px;font-size:16.5px;color:#b50005;font-weight:900;letter-spacing:12.750px;">绘学霸</div>
<div class="t ui" style="left:897.70px;top:761.56px;font-size:15.4px;color:#fbfcfd;">在</div>
<div class="t ui" style="left:916.00px;top:759.00px;font-size:17.6px;color:#fbfcfd;font-weight:bold;letter-spacing:2.233px;">AppStore</div>
<div class="t ui" style="left:1013.40px;top:761.56px;font-size:15.4px;color:#fbfcfd;">或</div>
<div class="t ui" style="left:1032.00px;top:761.23px;font-size:15.8px;color:#fbfcfd;font-weight:900;letter-spacing:4.197px;">应用宝</div>
<div class="t ui" style="left:1090.60px;top:761.56px;font-size:15.4px;color:#fbfcfd;letter-spacing:4.674px;">搜索下载</div>
<svg style="left:0;top:0;" width="1200" height="800" viewBox="0 0 1200 800"><path d="M43.1 728.75 L48.5 723.1 L59.4 730 V755.6 L67.5 748.75 L76.9 756.25 L77.5 728.1 L83.75 721.9 L89.4 728.1 V760 L79.4 767.1 L66.9 758 L54.4 767.1 L43.1 761.9 Z" fill="#fff"/><path d="M43.3 728.9 L53.7 734.8 V766.6 M53.7 734.8 L59.2 730.2 M83.1 722.6 V753 L89.3 759.8" fill="none" stroke="#b50005" stroke-width="0.8"/><text x="601.6" y="788.2" font-family="Liberation Sans, sans-serif" font-size="10.5" font-weight="bold" fill="#f2f4f6">-cn</text><path d="M589.5 774 L598.6 779.2 V789.6 L589.5 794.8 L580.4 789.6 V779.2 Z" fill="#f2f4f6"/><text x="582.4" y="788.6" font-family="Liberation Sans, sans-serif" font-size="11" font-weight="bold" fill="#eceff2">UI</text></svg>
</div>

</body>
</html>
